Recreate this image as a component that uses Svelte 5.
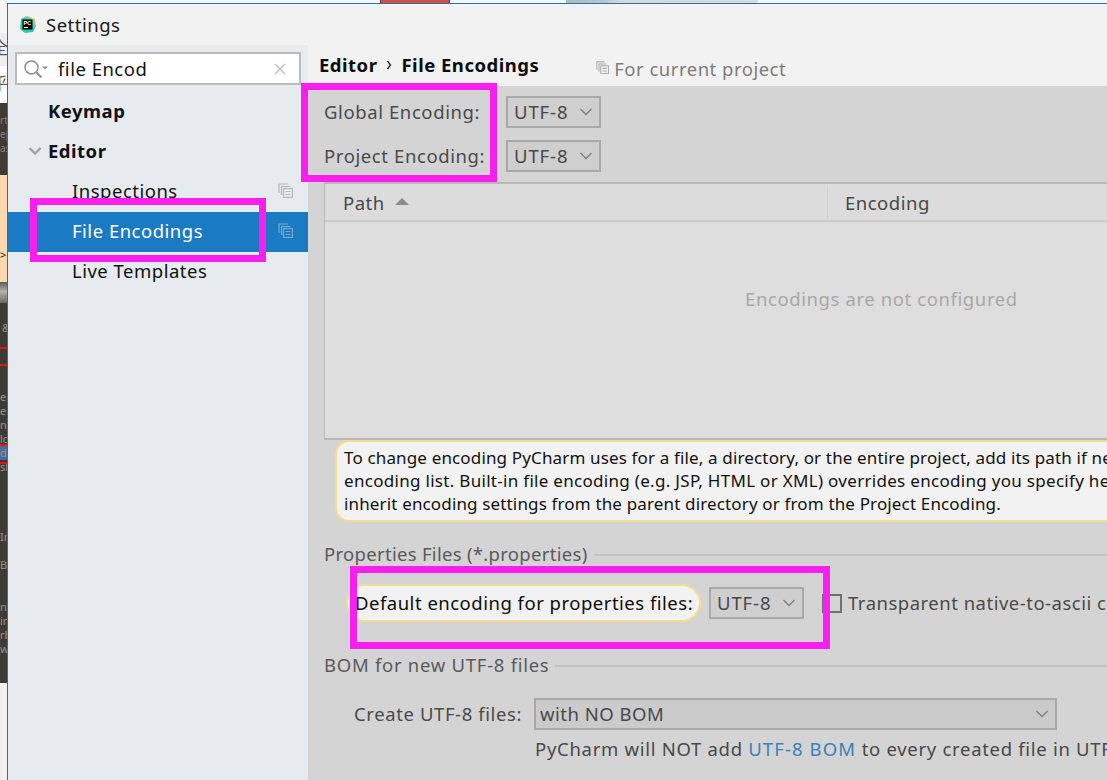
<script>
  const rows = [
    { label: 'Keymap', bold: true },
    { label: 'Editor', bold: true, arrow: true },
    { label: 'Inspections', child: true, copy: true },
    { label: 'File Encodings', child: true, copy: true, selected: true },
    { label: 'Live Templates', child: true }
  ];
  const stripBits = ['rti', 'ep', 'ask'];
  const stripList = ['en', 'e', 'ns', 'loc', 'din', 'sla'];
  const stripLower = ['In', 'Bi', 'ntr', 'ini', 'rbi', 'w'];
</script>

{#snippet chevron(cls)}
  <svg class={cls} viewBox="0 0 14 8" aria-hidden="true"><path d="M1.500 1l5.500 5.500L12.500 1" fill="none" stroke="currentColor" stroke-width="1.400"/></svg>
{/snippet}

{#snippet copyIcon(cls)}
  <svg class={cls} viewBox="0 0 15 15" aria-hidden="true">
    <path d="M1 10V1h9" fill="none" stroke="currentColor" stroke-width="1.200"/>
    <path d="M3.500 12V3.500H12" fill="none" stroke="currentColor" stroke-width="1.200"/>
    <rect x="5.500" y="5.500" width="9" height="9" fill="none" stroke="currentColor" stroke-width="1.200"/>
    <path d="M7.500 8.500h5M7.500 11.500h5" stroke="currentColor" stroke-width="1.200"/>
  </svg>
{/snippet}

{#snippet combo(text, cls)}
  <div class="combo {cls}"><span>{text}</span>{@render chevron('chev')}</div>
{/snippet}

<div class="screen">
  <div class="topstrip">
    <div class="redbtn"></div>
    <div class="smear"></div>
  </div>
  <div class="leftstrip">
    <div class="ls ls-a"></div>
    <div class="ls ls-b"><span>全</span></div>
    <div class="ls ls-c"><span>乎</span></div>
    <div class="ls ls-d">{#each stripBits as b}<span>{b}</span>{/each}</div>
    <div class="ls ls-e"><span>&gt;</span></div>
    <div class="ls ls-f"></div>
    <div class="ls ls-g">
      <span class="b1">&amp;</span>
      <i class="red r1"></i>
      <i class="red r2"></i>
      <div class="lst">{#each stripList as s, i}<span class:hl={i === 4}>{s}</span>{/each}</div>
      <i class="red r3"></i>
      <i class="red r4"></i>
      <div class="lst2">{#each stripLower as s}<span>{s}</span>{/each}</div>
    </div>
    <div class="ls ls-h"></div>
  </div>

  <div class="window">
    <header class="titlebar">
      <svg class="logo" viewBox="0 0 17 17" aria-hidden="true">
        <defs>
          <linearGradient id="pcg" x1="0" y1="1" x2="1" y2="0">
            <stop offset="0" stop-color="#21d789"/><stop offset="0.5" stop-color="#24c3c9"/><stop offset="1" stop-color="#f5e14b"/>
          </linearGradient>
        </defs>
        <path d="M2 3l6-3 8 3 1 7-3 6-8 1-5-4z" fill="url(#pcg)"/>
        <rect x="3.500" y="3.500" width="10" height="10" fill="#000"/>
        <rect x="5" y="11" width="4" height="1" fill="#fff"/>
        <text x="4.600" y="8.800" class="logotext">PC</text>
      </svg>
      <span class="title">Settings</span>
    </header>

    <div class="body">
      <aside class="sidebar">
        <div class="search">
          <svg class="loupe" viewBox="0 0 25 18" aria-hidden="true">
            <circle cx="7.500" cy="7.500" r="6.500" fill="none" stroke="#909090" stroke-width="1.500"/>
            <path d="M12.500 12.500l5 5" stroke="#909090" stroke-width="2"/>
            <path d="M18 6.500h6l-3 3z" fill="#909090"/>
          </svg>
          <span class="query">file Encod</span>
          <svg class="clear" viewBox="0 0 12 12" aria-hidden="true"><path d="M1 1l10 10M11 1L1 11" stroke="#bcbcbc" stroke-width="1.300"/></svg>
        </div>
        <nav class="tree">
          {#each rows as r}
            <div class="row" class:bold={r.bold} class:child={r.child} class:selected={r.selected}>
              {#if r.arrow}{@render chevron('treearrow')}{/if}
              <span>{r.label}</span>
              {#if r.copy}{@render copyIcon('rowcopy')}{/if}
            </div>
          {/each}
        </nav>
      </aside>

      <main class="main">
        <div class="crumbs">
          <b>Editor</b>
          <svg class="sep" viewBox="0 0 6 10" aria-hidden="true"><path d="M1.500 1l3 4-3 4" fill="none" stroke="#222" stroke-width="1.300"/></svg>
          <b>File Encodings</b>
          {@render copyIcon('crumbcopy')}
          <span class="scope">For current project</span>
        </div>

        <div class="content">
          <div class="encrow first">
            <span class="enclabel">Global Encoding:</span>
            {@render combo('UTF-8', 'small')}
          </div>
          <div class="encrow second">
            <span class="enclabel">Project Encoding:</span>
            {@render combo('UTF-8', 'small')}
          </div>

          <div class="table">
            <div class="thead">
              <div class="th path">Path <i class="sort"></i></div>
              <div class="th enc">Encoding</div>
            </div>
            <div class="tbody">Encodings are not configured</div>
          </div>

          <div class="balloon">
            <div>To change encoding PyCharm uses for a file, a directory, or the entire project, add its path if necessary</div>
            <div class="wider">encoding list. Built-in file encoding (e.g. JSP, HTML or XML) overrides encoding you specify here.</div>
            <div>inherit encoding settings from the parent directory or from the Project Encoding.</div>
          </div>

          <div class="legend props"><span>Properties Files (*.properties)</span><i></i></div>
          <div class="propsrow">
            <div class="pill">Default encoding for properties files:</div>
            {@render combo('UTF-8', 'small')}
            <span class="check"></span>
            <span class="checktext">Transparent native-to-ascii conversion</span>
          </div>

          <div class="legend bom"><span>BOM for new UTF-8 files</span><i></i></div>
          <div class="bomrow">
            <span class="bomlabel">Create UTF-8 files:</span>
            {@render combo('with NO BOM', 'wide')}
          </div>
          <div class="bomnote">PyCharm will NOT add <a href="#bom">UTF-8 BOM</a> to every created file in UTF-8 encoding</div>
        </div>
      </main>
    </div>
  </div>

  <div class="mark mark-a"></div>
  <div class="mark mark-b"></div>
  <div class="mark mark-c"></div>
</div>

<style>
  :global(body) { margin: 0; background: #fff; }

  .screen {
    position: relative;
    width: 1107px;
    height: 780px;
    overflow: hidden;
    background: #fff;
    font-family: "Noto Sans", "Noto Sans CJK SC", sans-serif;
    font-size: 18.500px;
    letter-spacing: 0.500px;
    color: #454545;
  }

  /* desktop behind the dialog */
  .topstrip { position: absolute; left: 0; top: 0; width: 100%; height: 3px; background: #f7f7f7; }
  .redbtn { position: absolute; left: 380px; top: 0; width: 70px; height: 3px; background: #d5503f; border: solid #7d2a20; border-width: 0 1px; box-sizing: border-box; }
  .smear { position: absolute; left: 566px; top: 0; width: 192px; height: 3px; background: linear-gradient(90deg, #b4b7bb, #c0c2c4 20%, #d8d7d4 28%, #dddbd8); }

  .leftstrip { position: absolute; left: 0; top: 0; width: 7px; height: 780px; overflow: hidden; display: flex; flex-direction: column; font-size: 12px; letter-spacing: 0; }
  .ls { overflow: hidden; position: relative; flex: none; }
  .ls-a { height: 33px; background: #f6f6f6; }
  .ls-b { height: 33px; background: #eeeeee; color: #555; font-size: 17px; line-height: 20px; }
  .ls-c { height: 37px; background: #fff; color: #7a5a20; font-size: 17px; line-height: 20px; }
  .ls-b span { position: absolute; left: -9px; top: 5px; }
  .ls-c span { position: absolute; left: -9px; top: 8px; }
  .ls-d { height: 72px; background: #3f3a34; color: #8a8074; font-size: 10px; line-height: 14px; display: flex; flex-direction: column; padding-top: 10px; box-sizing: border-box; }
  .ls-d span, .lst span, .lst2 span { white-space: nowrap; display: block; }
  .ls-e { height: 107px; background: #fcd8ae; color: #222; }
  .ls-e span { position: absolute; left: 0; top: 72px; font-size: 11px; }
  .ls-f { height: 21px; background: linear-gradient(#5c5a55, #b4b2aa 45%, #6b6860); }
  .ls-g { height: 380px; background: #3d3a36; color: #9b9287; font-size: 11px; }
  .ls-g .b1 { position: absolute; left: 2px; top: 17px; }
  .red { position: absolute; left: 0; width: 7px; height: 2px; background: #e01515; }
  .r1 { top: 44px; } .r2 { top: 61px; } .r3 { top: 141px; } .r4 { top: 159px; }
  .lst { position: absolute; left: 0; top: 87px; line-height: 14px; }
  .lst .hl { background: #4c6a96; width: 7px; overflow: hidden; }
  .lst2 { position: absolute; left: 0; top: 227px; line-height: 14px; }
  .lst2 span:nth-child(1) { margin-bottom: 14px; }
  .lst2 span:nth-child(2) { margin-bottom: 28px; }
  .ls-h { flex: 1; background: #f0f0f0; }

  /* dialog */
  .window {
    position: absolute;
    left: 7px;
    top: 3px;
    width: 1100px;
    height: 777px;
    box-sizing: border-box;
    border: solid #1a75bb;
    border-width: 1px 0 0 1px;
    background: #f2f2f2;
    display: flex;
    flex-direction: column;
  }
  .titlebar { height: 41px; flex: none; display: flex; align-items: center; padding-left: 11px; gap: 10px; background: #f2f2f2; color: #1a1a1a; }
  .logo { width: 17px; height: 17px; flex: none; }
  .logotext { font: 700 5.500px "Liberation Sans", sans-serif; letter-spacing: 0; fill: #fff; }
  .title { line-height: 24px; }

  .body { flex: 1; display: flex; min-height: 0; }

  .sidebar { width: 300px; flex: none; background: #e6ebf0; box-sizing: border-box; padding-top: 7px; }
  .search {
    margin-left: 7px;
    width: 286px;
    height: 33px;
    box-sizing: border-box;
    border: 2px solid #bcbcbc;
    background: #fff;
    display: flex;
    align-items: center;
    color: #111;
    padding-left: 7px;
  }
  .loupe { width: 25px; height: 18px; flex: none; }
  .query { margin-left: 9px; line-height: 24px; flex: 1; }
  .clear { width: 12px; height: 12px; margin-right: 13px; flex: none; }

  .tree { margin-top: 7px; }
  .row { height: 40px; box-sizing: border-box; padding-bottom: 4px; display: flex; align-items: center; position: relative; padding-left: 40px; color: #111; }
  .row.child { padding-left: 64px; }
  .row.bold { font-weight: 700; letter-spacing: 0.500px; }
  .row.selected { background: #1a7bc2; color: #fff; }
  .treearrow { position: absolute; left: 20px; top: 15px; width: 14px; height: 8px; color: #a0a0a0; }
  .treearrow path { stroke-width: 2.400; }
  .rowcopy { position: absolute; left: 270px; top: 11px; width: 15px; height: 15px; color: #b4b9bd; }
  .selected .rowcopy { color: #7ba9cf; }

  .main { flex: 1; min-width: 0; display: flex; flex-direction: column; overflow: hidden; }
  .crumbs { height: 41px; flex: none; display: flex; align-items: center; padding: 0 0 0 11px; color: #0c0c0c; box-sizing: border-box; }
  .crumbs b { font-weight: 700; line-height: 24px; margin-top: -1px; }
  .sep { width: 6px; height: 10px; margin: 0 9px 2px 9px; flex: none; }
  .crumbcopy { width: 13px; height: 13px; margin: 4px 5px 0 57px; color: #a9adb1; flex: none; }
  .scope { color: #7d7d7d; line-height: 24px; margin-top: 7px; }

  .content { flex: 1; background: #d4d4d4; padding: 0 0 0 16px; min-height: 0; }
  .encrow { display: flex; align-items: center; height: 32px; }
  .encrow.first { margin-top: 10px; }
  .encrow.second { margin-top: 12px; }
  .enclabel { width: 182px; flex: none; color: #4a4a4a; line-height: 24px; white-space: nowrap; letter-spacing: 0.600px; }

  .combo {
    box-sizing: border-box;
    height: 32px;
    border: 2px solid #a9a9a9;
    background: #cfcfcf;
    display: flex;
    align-items: center;
    color: #484848;
    flex: none;
  }
  .combo span { flex: 1; white-space: nowrap; line-height: 24px; }
  .combo.small { width: 95px; padding: 0 6px 0 6px; }
  .combo.small span { letter-spacing: 0.900px; }
  .combo.wide { width: 523px; padding: 0 6px 0 4px; background: #cbcbcb; }
  .chev { width: 14px; height: 8px; color: #7f7f7f; flex: none; }

  .table { margin-top: 10px; width: 800px; box-sizing: border-box; border: solid #b9b9b9; border-width: 2px 0 2px 1px; background: #dedede; }
  .thead { display: flex; height: 38px; box-sizing: border-box; border-bottom: 2px solid #cbcbcb; background: #dcdcdc; }
  .th { display: flex; align-items: center; line-height: 24px; color: #484848; box-sizing: border-box; padding-top: 2px; }
  .path { width: 502px; padding-left: 18px; }
  .sort { display: inline-block; width: 0; height: 0; margin-left: 10px; margin-bottom: 3px; border: solid transparent; border-width: 0 7px 7px; border-bottom-color: #8a8a8a; }
  .enc { flex: 1; padding-left: 17px; border-left: 1px solid #cfcfcf; margin: 1px 0; }
  .tbody { height: 216px; box-sizing: border-box; padding: 0 0 0 420px; line-height: 154px; color: #a8a8a8; white-space: nowrap; letter-spacing: 0.600px; }

  .balloon {
    margin: 0 0 0 11px;
    width: 900px;
    height: 82px;
    box-sizing: border-box;
    border: solid #f5dc8e;
    border-width: 2px 0 2px 2px;
    border-radius: 14px 0 0 14px;
    background: #f2f2f2;
    color: #111;
    font-size: 17px;
    letter-spacing: 0.150px;
    line-height: 23px;
    padding: 4px 0 0 7px;
    white-space: nowrap;
  }
  .balloon .wider { letter-spacing: 0.300px; }

  .legend { display: flex; align-items: center; gap: 6px; height: 24px; color: #5a5a5a; line-height: 24px; white-space: nowrap; }
  .legend i { flex: 1; height: 2px; background: #c2c2c2; margin-top: 1px; }
  .legend.props { margin-top: 20px; letter-spacing: 0.300px; }
  .legend.bom { margin-top: 31px; letter-spacing: 0.720px; }

  .propsrow { display: flex; align-items: center; margin-top: 18px; height: 38px; padding-left: 22px; white-space: nowrap; }
  .pill {
    box-sizing: border-box;
    width: 355px;
    height: 38px;
    flex: none;
    border: 2px solid #f5dc8e;
    border-radius: 19px;
    background: #f2f2f2;
    color: #0c0c0c;
    padding-left: 7px;
    line-height: 34px;
    margin-right: 8px;
    white-space: nowrap;
    overflow: hidden;
  }
  .check { width: 20px; height: 19px; box-sizing: border-box; border: 2px solid #707070; margin: 0 6px 0 18px; flex: none; }
  .checktext { color: #4a4a4a; line-height: 24px; }

  .bomrow { display: flex; align-items: center; height: 32px; margin-top: 21px; padding-left: 30px; }
  .bomlabel { width: 180px; flex: none; color: #4a4a4a; white-space: nowrap; line-height: 24px; letter-spacing: 0.600px; }
  .bomnote { margin: 7px 0 0 211px; line-height: 24px; white-space: nowrap; color: #484848; letter-spacing: 0.700px; }
  .bomnote a { color: #3c82b8; text-decoration: none; letter-spacing: 1.100px; }

  /* annotation rectangles drawn over the screenshot */
  .mark { position: absolute; box-sizing: border-box; border: 7px solid #f91fef; }
  .mark-a { left: 30px; top: 198px; width: 236px; height: 64px; }
  .mark-b { left: 301px; top: 83px; width: 196px; height: 99px; }
  .mark-c { left: 350px; top: 566px; width: 480px; height: 83px; }
</style>
